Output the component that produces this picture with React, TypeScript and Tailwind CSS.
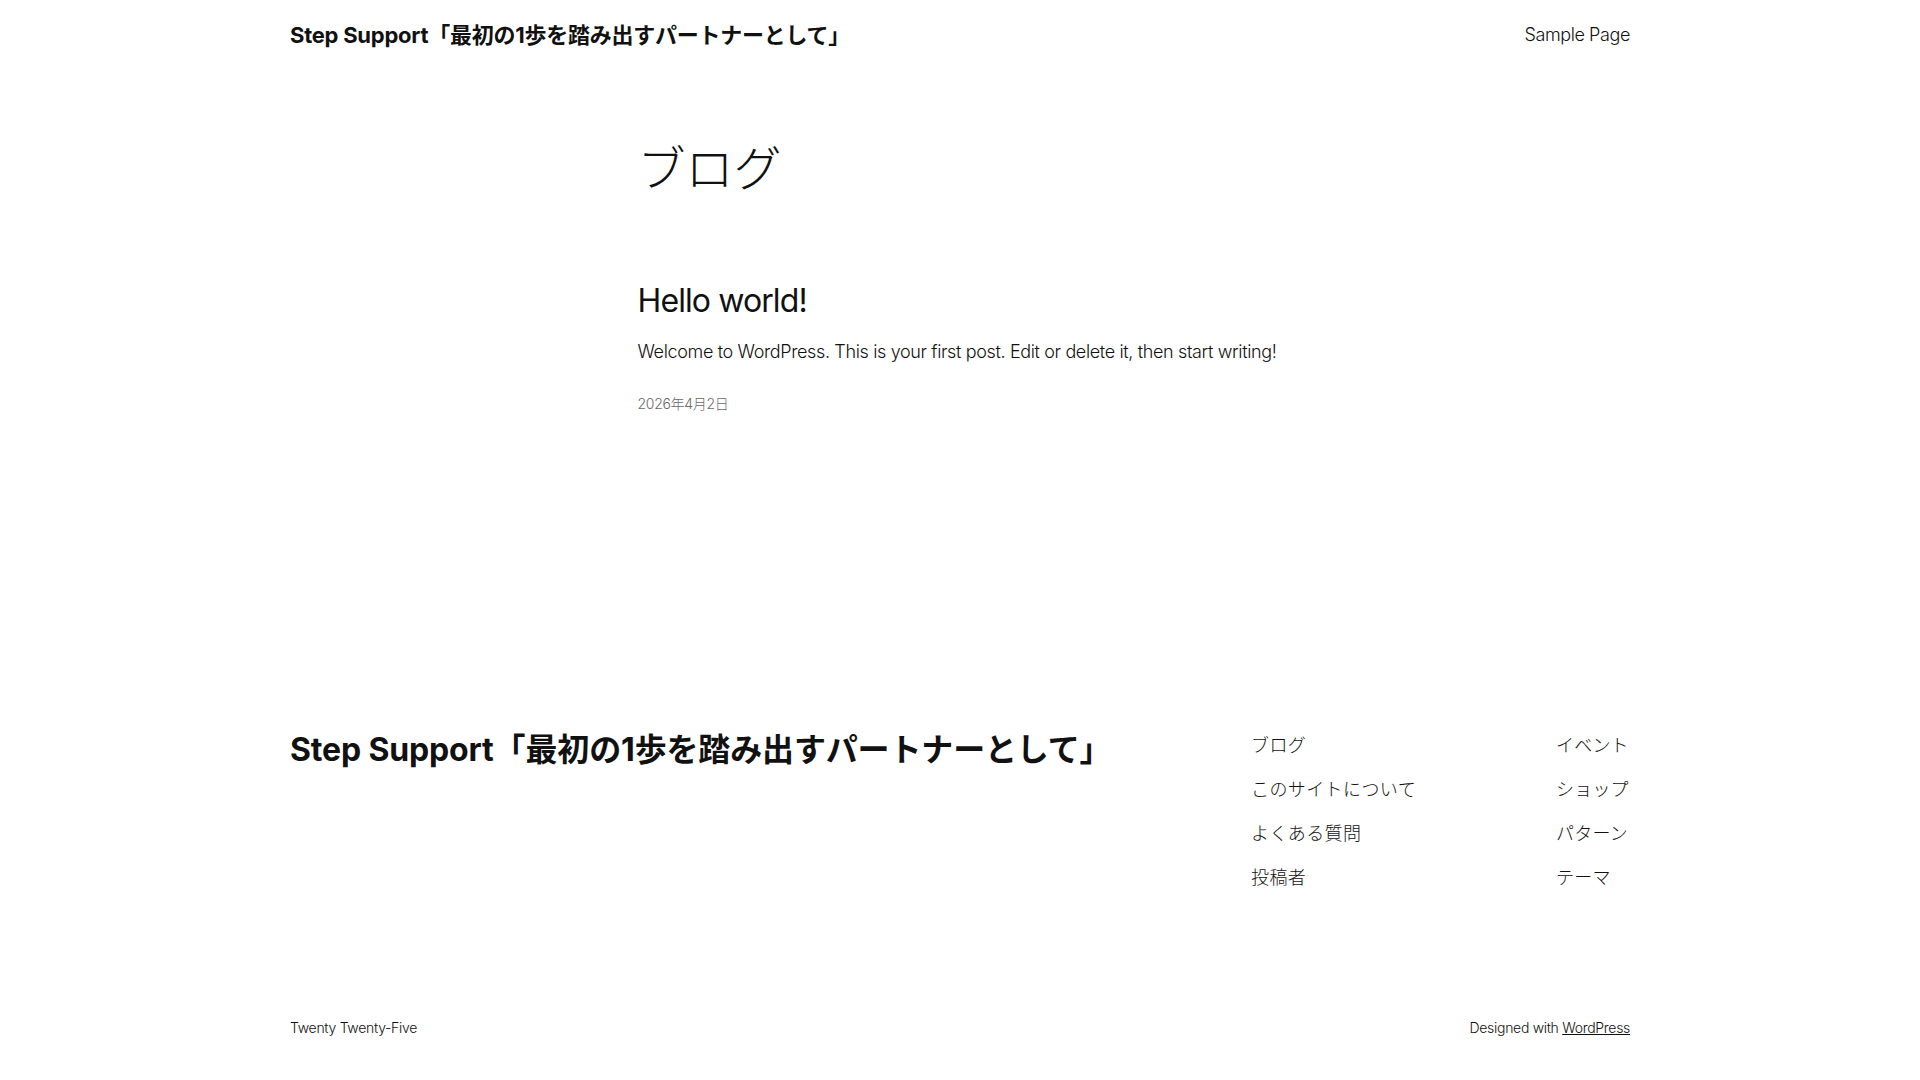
export default function App() {
  const navLeft = ["ブログ", "このサイトについて", "よくある質問", "投稿者"];
  const navRight = ["イベント", "ショップ", "パターン", "テーマ"];

  return (
    <div className="min-h-screen bg-white text-[#111111] font-['Inter','Noto_Sans_CJK_JP',sans-serif]">
      {/* header */}
      <header className="mx-auto flex w-[1340px] items-center justify-between pt-[22px]">
        <a href="#" className="text-[22px] font-bold leading-[26px] tracking-[-0.25px]">
          Step Support「最初の1歩を踏み出すパートナーとして」
        </a>
        <nav>
          <a href="#" className="text-[18px] font-light leading-[26px] tracking-[-0.4px]">
            Sample Page
          </a>
        </nav>
      </header>

      {/* main */}
      <main className="mx-auto w-[645px]">
        <h1 className="mt-[94px] text-[48px] font-light leading-[54px]">ブログ</h1>
        <article className="mt-[86px]">
          <h2 className="text-[32px] font-normal leading-[38px] tracking-[-0.9px]">
            <a href="#">Hello world!</a>
          </h2>
          <p className="mt-[17px] text-[18px] font-light leading-[29px] tracking-[-0.36px]">
            Welcome to WordPress. This is your first post. Edit or delete it, then start writing!
          </p>
          <time className="mt-[27px] block text-[14px] font-light leading-[22px] tracking-[-0.3px] text-[#686868]">
            2026年4月2日
          </time>
        </article>
      </main>

      {/* footer */}
      <footer className="mx-auto mt-[316px] w-[1340px]">
        <div className="flex items-start justify-between">
          <a href="#" className="text-[32px] font-bold leading-[38px] tracking-[-0.15px]">
            Step Support「最初の1歩を踏み出すパートナーとして」
          </a>
          <div className="mt-[1px] flex w-[379px] justify-between">
            <ul className="flex flex-col gap-[17px]">
              {navLeft.map((item) => (
                <li key={item} className="text-[18px] font-light leading-[27px] tracking-[0.4px]">
                  <a href="#">{item}</a>
                </li>
              ))}
            </ul>
            <ul className="flex w-[74px] flex-col gap-[17px]">
              {navRight.map((item) => (
                <li key={item} className="text-[18px] font-light leading-[27px] tracking-[0.2px]">
                  <a href="#">{item}</a>
                </li>
              ))}
            </ul>
          </div>
        </div>
        <div className="mt-[126px] flex justify-between pb-[40px] text-[14px] font-light leading-[22px] tracking-[-0.3px]">
          <p>Twenty Twenty-Five</p>
          <p>
            Designed with{" "}
            <a href="#" className="underline">
              WordPress
            </a>
          </p>
        </div>
      </footer>
    </div>
  );
}
